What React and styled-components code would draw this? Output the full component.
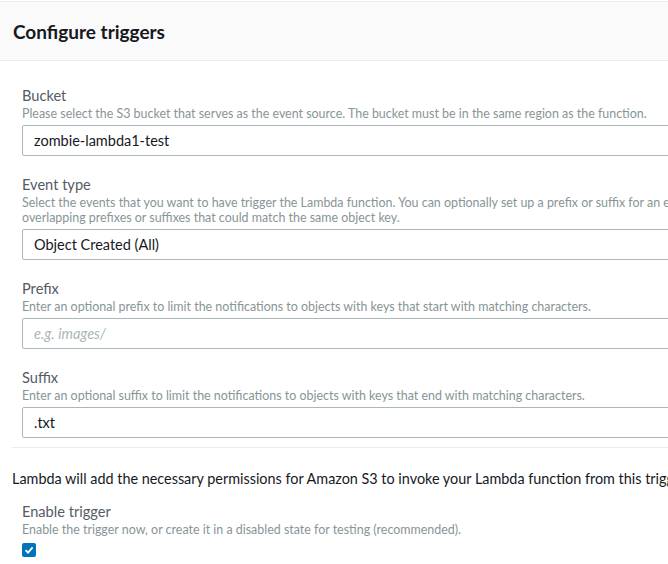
import React from 'react'
import styled, { createGlobalStyle } from 'styled-components'

const GlobalStyle = createGlobalStyle`
  html, body {
    margin: 0;
    padding: 0;
    background: #ffffff;
    overflow: hidden;
  }
  body {
    font-family: Lato, "Liberation Sans", sans-serif;
  }
`

const Panel = styled.div`
  width: 1000px;
  padding-top: 1px;
`

const Header = styled.div`
  display: flex;
  align-items: center;
  height: 58px;
  padding: 0 13px;
  background: #fafafa;
  border-top: 1px solid #eaeded;
  border-bottom: 1px solid #eaeded;
`

const Title = styled.h2`
  margin: 0;
  font-size: 19px;
  font-weight: 700;
  color: #16191f;
`

const Body = styled.div`
  padding: 25px 12px 0;
`

const Fields = styled.div`
  display: flex;
  flex-direction: column;
  gap: 19px;
  padding-left: 10px;
`

const Field = styled.div`
  display: flex;
  flex-direction: column;
`

const Label = styled.label`
  font-size: 14.6px;
  line-height: 20px;
  color: #545b64;
`

const Hint = styled.div`
  font-size: 12.45px;
  line-height: 15px;
  color: #879596;
  white-space: nowrap;
`

const Input = styled.div`
  box-sizing: border-box;
  height: 31px;
  margin-top: 4px;
  padding: 0 11px;
  display: flex;
  align-items: center;
  border: 1px solid #aab7b8;
  border-radius: 2px;
  font-size: 14.5px;
  color: ${p => (p.$placeholder ? '#aab7b8' : '#16191f')};
  font-style: ${p => (p.$placeholder ? 'italic' : 'normal')};
`

const Divider = styled.hr`
  margin: 9px 0 0;
  border: 0;
  border-top: 1px solid #eaeded;
`

const Note = styled.p`
  margin: 21px 0 14px;
  font-size: 14.4px;
  line-height: 19px;
  color: #16191f;
  white-space: nowrap;
`

const Checkbox = styled.span`
  display: inline-flex;
  align-items: center;
  justify-content: center;
  width: 14px;
  height: 14px;
  margin-top: 6px;
  border-radius: 2px;
  background: #0073bb;
`

function TextField({ label, hint, value, placeholder }) {
  return (
    <Field>
      <Label>{label}</Label>
      <Hint>{hint}</Hint>
      <Input $placeholder={!value}>{value || placeholder}</Input>
    </Field>
  )
}

export default function App() {
  return (
    <>
      <GlobalStyle />
      <Panel>
        <Header>
          <Title>Configure triggers</Title>
        </Header>
        <Body>
          <Fields>
            <TextField
              label="Bucket"
              hint="Please select the S3 bucket that serves as the event source. The bucket must be in the same region as the function."
              value="zombie-lambda1-test"
            />
            <TextField
              label="Event type"
              hint={
                <>
                  Select the events that you want to have trigger the Lambda function. You can optionally set up a prefix or suffix for an event. However, for each bucket, individual events cannot have multiple configurations with
                  <br />
                  overlapping prefixes or suffixes that could match the same object key.
                </>
              }
              value="Object Created (All)"
            />
            <TextField
              label="Prefix"
              hint="Enter an optional prefix to limit the notifications to objects with keys that start with matching characters."
              placeholder="e.g. images/"
            />
            <TextField
              label="Suffix"
              hint="Enter an optional suffix to limit the notifications to objects with keys that end with matching characters."
              value=".txt"
            />
          </Fields>
          <Divider />
          <Note>
            Lambda will add the necessary permissions for Amazon S3 to invoke your Lambda function from this trigger.
          </Note>
          <Fields>
            <Field>
              <Label>Enable trigger</Label>
              <Hint>Enable the trigger now, or create it in a disabled state for testing (recommended).</Hint>
              <Checkbox>
                <svg width="10" height="10" viewBox="0 0 10 10">
                  <path d="M1.5 5.2 L4 7.6 L8.6 2.4" fill="none" stroke="#fff" strokeWidth="1.8" />
                </svg>
              </Checkbox>
            </Field>
          </Fields>
        </Body>
      </Panel>
    </>
  )
}
